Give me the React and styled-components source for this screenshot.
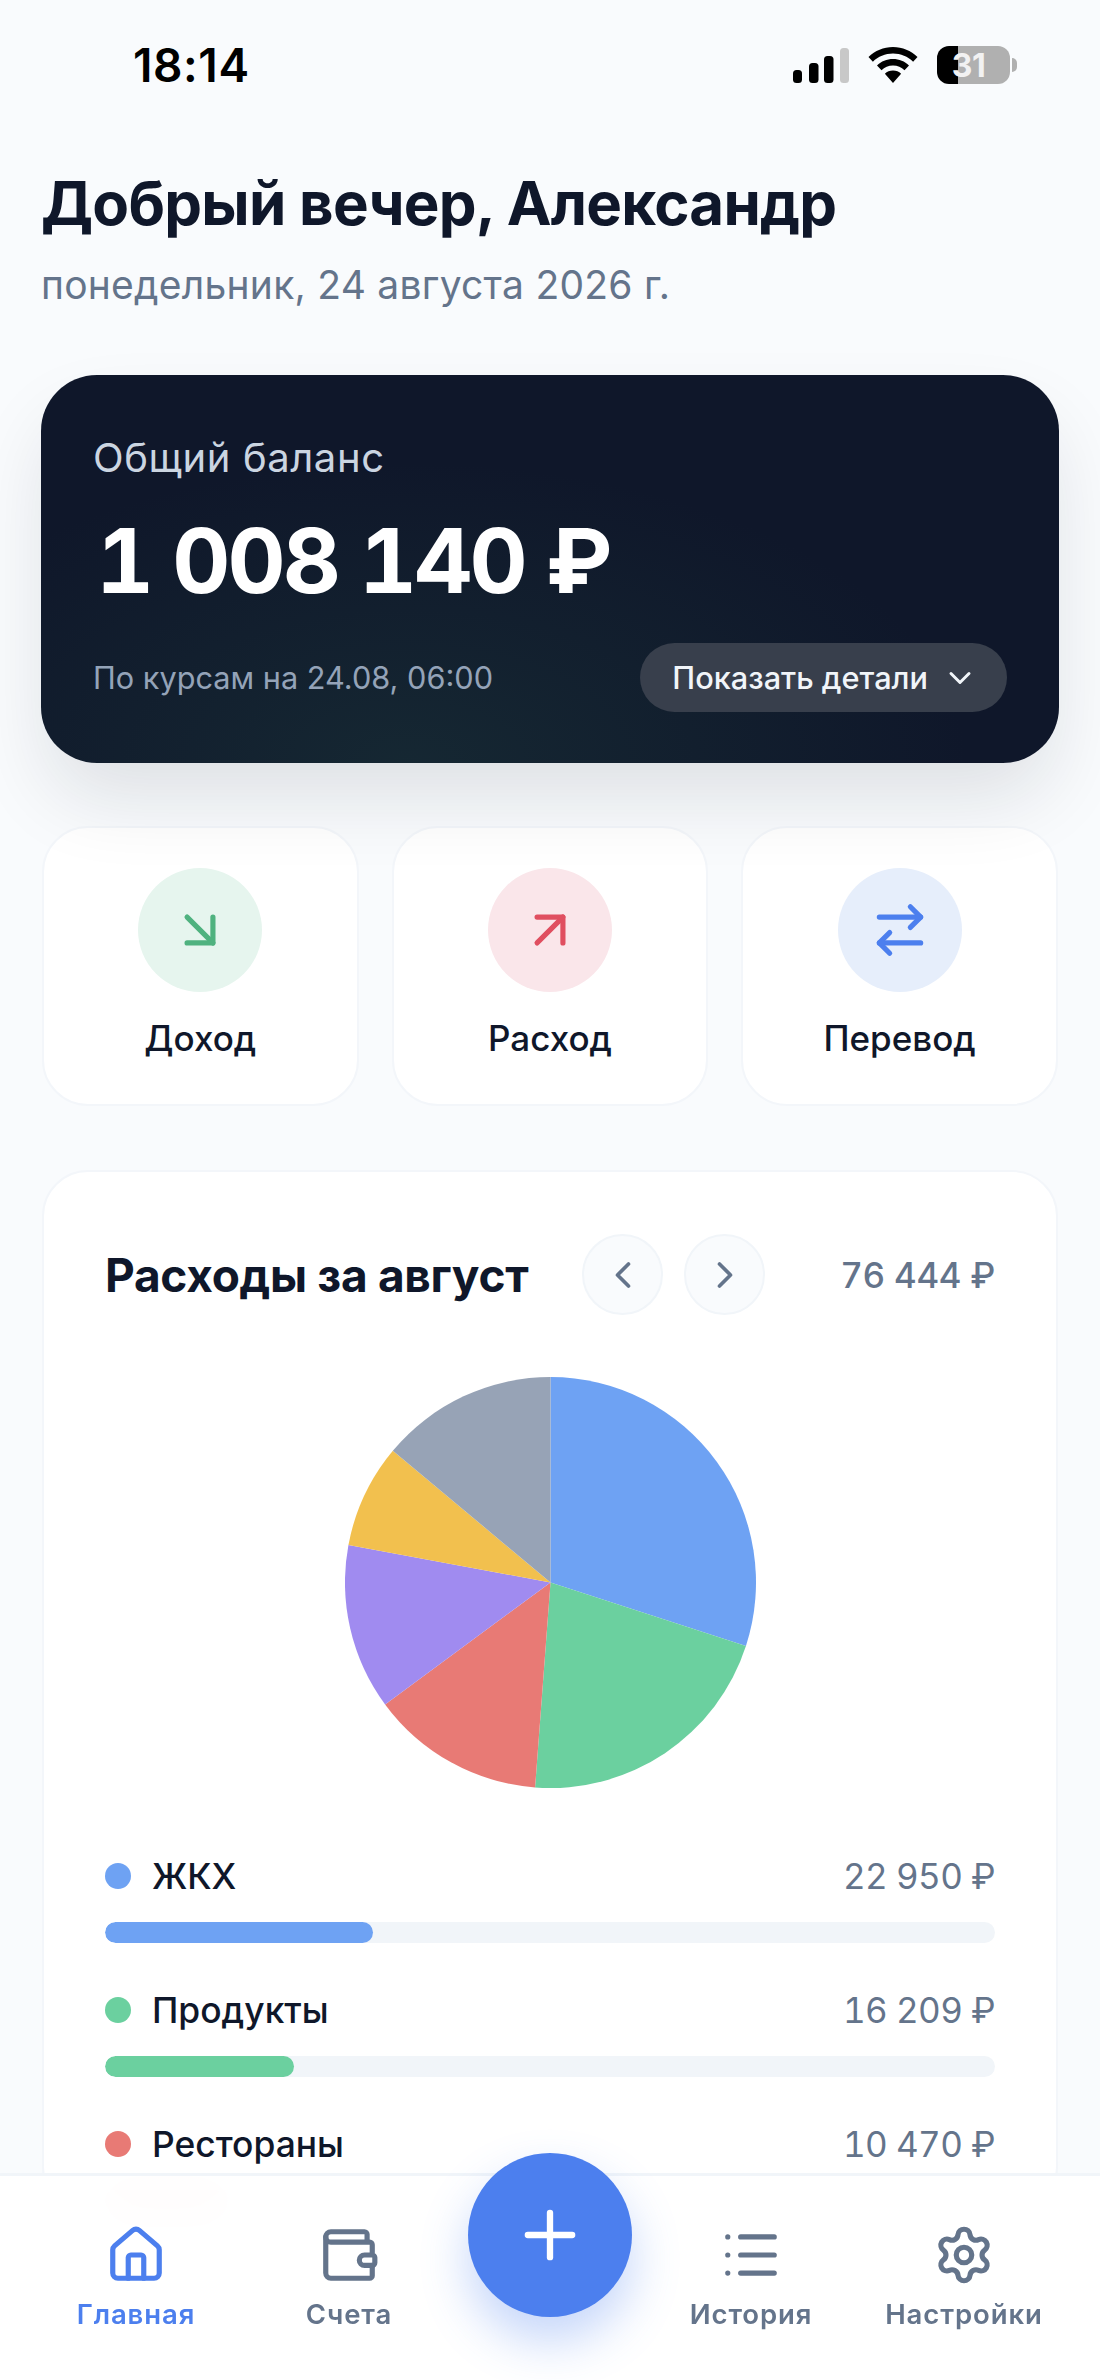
import React from 'react';
import styled, { createGlobalStyle } from 'styled-components';
import {
  ArrowDownRight,
  ArrowRightLeft,
  ArrowUpRight,
  ChevronDown,
  ChevronLeft,
  ChevronRight,
  House,
  List,
  Plus,
  Settings,
  Wallet,
} from 'lucide-react';

const SLICES = [
  { color: '#6ea2f3', sweep: 108 },
  { color: '#6bd09f', sweep: 76.3 },
  { color: '#e87a75', sweep: 49.3 },
  { color: '#a08bf0', sweep: 46.9 },
  { color: '#f2c04e', sweep: 29.4 },
  { color: '#97a3b6', sweep: 50.1 },
];

const CATEGORIES = [
  { name: 'ЖКХ', amount: '22\u00a0950\u00a0₽', color: '#6ea2f3', share: 30.1 },
  { name: 'Продукты', amount: '16\u00a0209\u00a0₽', color: '#6bd09f', share: 21.2 },
  { name: 'Рестораны', amount: '10\u00a0470\u00a0₽', color: '#e87a75', share: 13.7 },
];

const PIE_R = 205.5;

const GlobalStyle = createGlobalStyle`
  html, body {
    margin: 0;
    padding: 0;
    background: #f9fbfd;
  }
  * {
    box-sizing: border-box;
  }
`;

const Page = styled.div`
  position: relative;
  width: 1100px;
  height: 2380px;
  overflow: hidden;
  background: #f9fbfd;
  font-family: Inter, "Noto Sans", sans-serif;
  color: #0f172a;
`;

const StatusBar = styled.div`
  display: flex;
  align-items: center;
  justify-content: space-between;
  height: 130px;
  padding: 0 83px 0 133px;
  color: #000;
`;

const Time = styled.span`
  font-size: 46px;
  font-weight: 600;
  letter-spacing: 0.6px;
`;

const StatusIcons = styled.div`
  display: flex;
  align-items: center;
  gap: 19px;
`;

const Battery = styled.div`
  display: flex;
  align-items: center;
  gap: 2px;
`;

const BatteryBody = styled.div`
  display: flex;
  align-items: center;
  justify-content: center;
  width: 73px;
  height: 38px;
  border-radius: 12px;
  background: linear-gradient(90deg, #000 0 21px, #b0b0b0 21px);
  color: #f2f2f2;
  font-size: 32px;
  font-weight: 700;
  letter-spacing: -0.5px;
  padding-right: 10px;
`;

const BatteryCap = styled.div`
  width: 5px;
  height: 14px;
  border-radius: 0 7px 7px 0;
  background: #b0b0b0;
`;

const Greeting = styled.header`
  padding: 37px 41px 0;
`;

const Title = styled.h1`
  margin: 0;
  font-size: 60px;
  line-height: 72px;
  font-weight: 700;
  letter-spacing: -0.75px;
  color: #0f172a;
`;

const DateLine = styled.p`
  margin: 22px 0 0;
  font-size: 39px;
  line-height: 48px;
  letter-spacing: 0.25px;
  color: #64748b;
`;

const BalanceCard = styled.section`
  position: relative;
  z-index: 1;
  margin: 66px 41px 0;
  height: 388px;
  padding: 61px 52px 0;
  border-radius: 56px;
  background:
    radial-gradient(ellipse 560px 300px at 36% 100%, rgba(30, 62, 62, 0.42), rgba(30, 62, 62, 0) 100%),
    #0f172a;
  box-shadow: 0 40px 80px -8px rgba(15, 23, 42, 0.12);
`;

const BalanceLabel = styled.div`
  font-size: 40px;
  line-height: 44px;
  letter-spacing: 0.6px;
  color: #cbd5e1;
`;

const BalanceAmount = styled.div`
  margin: 31px 0 0 3px;
  font-size: 90px;
  line-height: 100px;
  font-weight: 700;
  letter-spacing: -3px;
  font-variant-numeric: tabular-nums;
  color: #fff;
`;

const BalanceFooter = styled.div`
  display: flex;
  align-items: center;
  justify-content: space-between;
  margin-top: 32px;
`;

const RatesNote = styled.span`
  font-size: 30.7px;
  color: #94a3b8;
`;

const DetailsButton = styled.button`
  display: flex;
  align-items: center;
  gap: 14px;
  height: 69px;
  padding: 0 29px 0 32px;
  border: none;
  border-radius: 35px;
  background: #383f4c;
  color: #f1f5f9;
  font-family: inherit;
  font-size: 30.7px;
  font-weight: 500;
`;

const Actions = styled.div`
  display: grid;
  grid-template-columns: repeat(3, 1fr);
  gap: 33px;
  margin: 63px 42px 0;
`;

const ActionCard = styled.div`
  display: flex;
  flex-direction: column;
  align-items: center;
  height: 280px;
  padding-top: 40px;
  border: 2px solid #f3f6fa;
  border-radius: 46px;
  background: #fff;
`;

const ActionCircle = styled.div`
  display: flex;
  align-items: center;
  justify-content: center;
  width: 124px;
  height: 124px;
  border-radius: 50%;
  background: ${(props) => props.$bg};
  color: ${(props) => props.$color};
`;

const ActionLabel = styled.span`
  margin-top: 26px;
  font-size: 35px;
  line-height: 40px;
  font-weight: 500;
`;

const SpendingCard = styled.section`
  margin: 64px 42px 0;
  padding: 62px 61px 0;
  border: 2px solid #f3f6fa;
  border-radius: 46px;
  background: #fff;
`;

const SpendingHeader = styled.div`
  display: flex;
  align-items: center;
`;

const SpendingTitle = styled.h2`
  flex: 1;
  margin: 0;
  font-size: 46px;
  font-weight: 700;
  letter-spacing: -0.3px;
  white-space: nowrap;
  color: #0f172a;
`;

const MonthButtons = styled.div`
  display: flex;
  gap: 21px;
  margin-right: 75px;
`;

const RoundButton = styled.button`
  display: flex;
  align-items: center;
  justify-content: center;
  width: 81px;
  height: 81px;
  padding: 0;
  border: 2px solid #f1f5f9;
  border-radius: 50%;
  background: #f9fbfd;
  color: #64748b;
`;

const TotalAmount = styled.span`
  font-size: 35px;
  font-weight: 500;
  letter-spacing: -0.3px;
  font-variant-numeric: tabular-nums;
  color: #64748b;
`;

const PieWrap = styled.div`
  display: flex;
  justify-content: center;
  margin-top: 62px;
`;

const Legend = styled.div`
  display: flex;
  flex-direction: column;
  gap: 47px;
  margin-top: 68px;
`;

const LegendRow = styled.div`
  display: flex;
  flex-direction: column;
  gap: 26px;
`;

const LegendHead = styled.div`
  display: flex;
  align-items: center;
  height: 40px;
`;

const Dot = styled.span`
  width: 26px;
  height: 26px;
  margin-right: 21px;
  border-radius: 50%;
  background: ${(props) => props.$color};
`;

const LegendName = styled.span`
  flex: 1;
  font-size: 35.4px;
  font-weight: 500;
`;

const LegendAmount = styled.span`
  font-size: 35px;
  letter-spacing: -0.6px;
  font-variant-numeric: tabular-nums;
  color: #64748b;
`;

const Track = styled.div`
  height: 21px;
  border-radius: 11px;
  background: #f1f5f9;
  overflow: hidden;
`;

const Fill = styled.div`
  height: 100%;
  border-radius: 11px;
  background: ${(props) => props.$color};
`;

const BottomNav = styled.nav`
  position: absolute;
  z-index: 2;
  left: 0;
  right: 0;
  bottom: 0;
  height: 207px;
  display: grid;
  grid-template-columns: 212px 214px 188px 214px 212px;
  padding: 0 30px;
  border-top: 3px solid #f1f5f9;
  background: rgba(255, 255, 255, 0.97);
  backdrop-filter: blur(20px);
`;

const NavItem = styled.div`
  display: flex;
  flex-direction: column;
  align-items: center;
  padding-top: 48px;
  color: ${(props) => (props.$active ? '#4c7fee' : '#64748b')};
`;

const NavLabel = styled.span`
  margin-top: 11px;
  font-size: 27.5px;
  line-height: 34px;
  font-weight: 600;
  letter-spacing: 0.9px;
  white-space: nowrap;
`;

const FabSlot = styled.div`
  display: flex;
  justify-content: center;
`;

const Fab = styled.button`
  display: flex;
  align-items: center;
  justify-content: center;
  width: 164px;
  height: 164px;
  margin-top: -23px;
  padding: 0;
  border: none;
  border-radius: 50%;
  background: #4c7fee;
  color: #fff;
  box-shadow: 0 24px 48px rgba(76, 127, 238, 0.32);
`;

const SignalIcon = () => (
  <svg width="56" height="35" viewBox="0 0 56 35">
    <rect x="0" y="22" width="9" height="13" rx="3.5" fill="#000" />
    <rect x="16" y="15" width="9.5" height="20" rx="3.5" fill="#000" />
    <rect x="31" y="8" width="9.5" height="27" rx="3.5" fill="#000" />
    <rect x="47" y="0" width="9" height="35" rx="3.5" fill="#c8c8c8" />
  </svg>
);

const WifiIcon = () => (
  <svg width="50" height="36" viewBox="0 0 50 36">
    <path d="M25 0C15.5 0 7 3.7 0.5 10l4.4 4.8C10.2 9.6 17.2 6.6 25 6.6s14.8 3 20.1 8.2l4.4-4.8C43 3.7 34.5 0 25 0z" fill="#000" />
    <path d="M25 12c-6.2 0-11.8 2.4-16 6.4l4.5 4.8c3-2.8 7-4.6 11.5-4.6s8.5 1.8 11.5 4.6l4.5-4.8C36.8 14.4 31.2 12 25 12z" fill="#000" />
    <path d="M25 23.5c-3.2 0-6 1.2-8.1 3.2L25 36l8.1-9.3c-2.1-2-4.9-3.2-8.1-3.2z" fill="#000" />
  </svg>
);

const polar = (angle) => {
  const rad = ((angle - 90) * Math.PI) / 180;
  return `${PIE_R + PIE_R * Math.cos(rad)} ${PIE_R + PIE_R * Math.sin(rad)}`;
};

const PieChart = () => {
  let start = 0;
  return (
    <svg width={PIE_R * 2} height={PIE_R * 2} viewBox={`0 0 ${PIE_R * 2} ${PIE_R * 2}`}>
      {SLICES.map(({ color, sweep }) => {
        const end = start + sweep;
        const d = `M${PIE_R} ${PIE_R}L${polar(start)}A${PIE_R} ${PIE_R} 0 0 1 ${polar(end)}Z`;
        start = end;
        return <path key={color} d={d} fill={color} />;
      })}
    </svg>
  );
};

const App = () => (
  <Page>
    <GlobalStyle />
    <StatusBar>
      <Time>18:14</Time>
      <StatusIcons>
        <SignalIcon />
        <WifiIcon />
        <Battery>
          <BatteryBody>31</BatteryBody>
          <BatteryCap />
        </Battery>
      </StatusIcons>
    </StatusBar>

    <Greeting>
      <Title>Добрый вечер, Александр</Title>
      <DateLine>понедельник, 24 августа 2026 г.</DateLine>
    </Greeting>

    <BalanceCard>
      <BalanceLabel>Общий баланс</BalanceLabel>
      <BalanceAmount>1&nbsp;008&nbsp;140&nbsp;₽</BalanceAmount>
      <BalanceFooter>
        <RatesNote>По курсам на 24.08, 06:00</RatesNote>
        <DetailsButton>
          Показать детали
          <ChevronDown size={36} strokeWidth={2} />
        </DetailsButton>
      </BalanceFooter>
    </BalanceCard>

    <Actions>
      <ActionCard>
        <ActionCircle $bg="#e6f5ee" $color="#4fb27f">
          <ArrowDownRight size={62} strokeWidth={2} />
        </ActionCircle>
        <ActionLabel>Доход</ActionLabel>
      </ActionCard>
      <ActionCard>
        <ActionCircle $bg="#fae6ea" $color="#e04f60">
          <ArrowUpRight size={62} strokeWidth={2} />
        </ActionCircle>
        <ActionLabel>Расход</ActionLabel>
      </ActionCard>
      <ActionCard>
        <ActionCircle $bg="#e6eefb" $color="#4c7fee">
          <ArrowRightLeft size={62} strokeWidth={2} />
        </ActionCircle>
        <ActionLabel>Перевод</ActionLabel>
      </ActionCard>
    </Actions>

    <SpendingCard>
      <SpendingHeader>
        <SpendingTitle>Расходы за август</SpendingTitle>
        <MonthButtons>
          <RoundButton><ChevronLeft size={44} strokeWidth={2} /></RoundButton>
          <RoundButton><ChevronRight size={44} strokeWidth={2} /></RoundButton>
        </MonthButtons>
        <TotalAmount>76&nbsp;444&nbsp;₽</TotalAmount>
      </SpendingHeader>
      <PieWrap>
        <PieChart />
      </PieWrap>
      <Legend>
        {CATEGORIES.map(({ name, amount, color, share }) => (
          <LegendRow key={name}>
            <LegendHead>
              <Dot $color={color} />
              <LegendName>{name}</LegendName>
              <LegendAmount>{amount}</LegendAmount>
            </LegendHead>
            <Track>
              <Fill $color={color} style={{ width: `${share}%` }} />
            </Track>
          </LegendRow>
        ))}
      </Legend>
    </SpendingCard>

    <BottomNav>
      <NavItem $active>
        <House size={62} strokeWidth={2} />
        <NavLabel>Главная</NavLabel>
      </NavItem>
      <NavItem>
        <Wallet size={62} strokeWidth={2} />
        <NavLabel>Счета</NavLabel>
      </NavItem>
      <FabSlot>
        <Fab><Plus size={76} strokeWidth={2} /></Fab>
      </FabSlot>
      <NavItem>
        <List size={62} strokeWidth={2} />
        <NavLabel>История</NavLabel>
      </NavItem>
      <NavItem>
        <Settings size={62} strokeWidth={2} />
        <NavLabel>Настройки</NavLabel>
      </NavItem>
    </BottomNav>
  </Page>
);

export default App;
